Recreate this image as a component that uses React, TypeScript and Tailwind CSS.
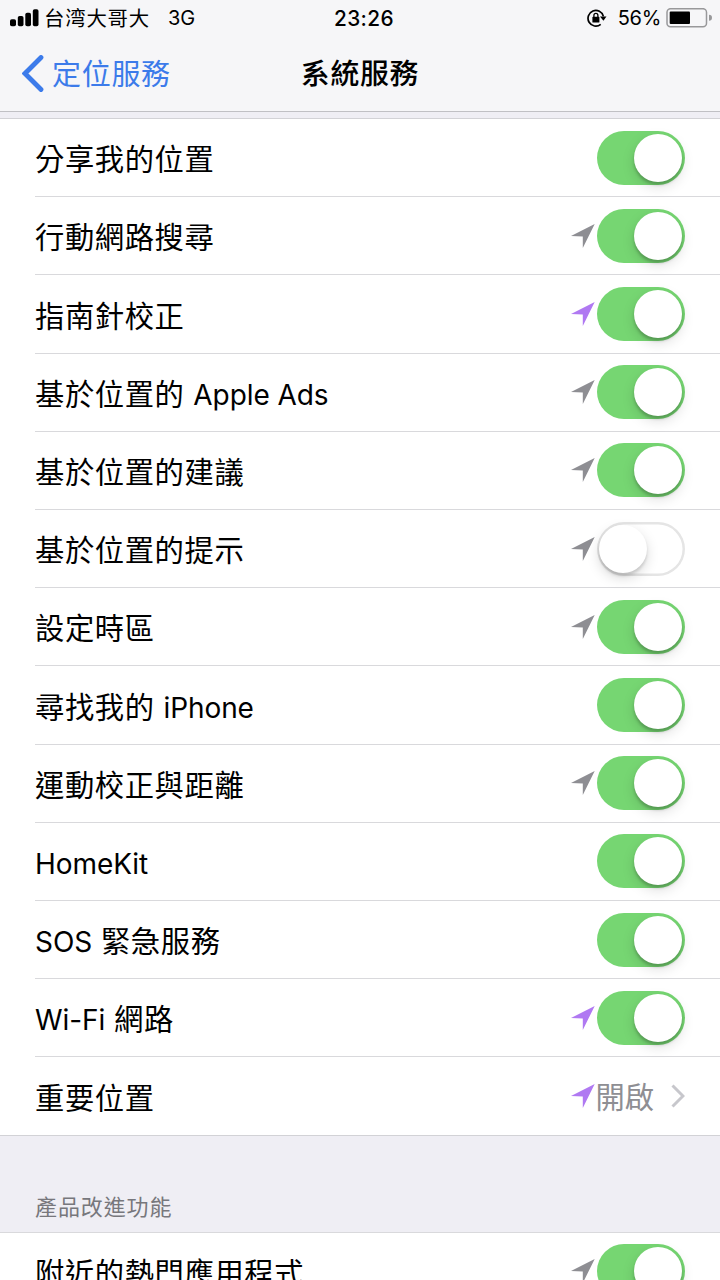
import { Fragment } from "react";
import clsx from "clsx";

type Arrow = "gray" | "purple";

interface Service {
  label: string;
  arrow?: Arrow;
  on?: boolean;
  value?: string;
}

const services: Service[] = [
  { label: "分享我的位置", on: true },
  { label: "行動網路搜尋", arrow: "gray", on: true },
  { label: "指南針校正", arrow: "purple", on: true },
  { label: "基於位置的 Apple Ads", arrow: "gray", on: true },
  { label: "基於位置的建議", arrow: "gray", on: true },
  { label: "基於位置的提示", arrow: "gray", on: false },
  { label: "設定時區", arrow: "gray", on: true },
  { label: "尋找我的 iPhone", on: true },
  { label: "運動校正與距離", arrow: "gray", on: true },
  { label: "HomeKit", on: true },
  { label: "SOS 緊急服務", on: true },
  { label: "Wi-Fi 網路", arrow: "purple", on: true },
  { label: "重要位置", arrow: "purple", value: "開啟" },
];

// Latin runs are set slightly smaller than the Chinese text around them
function Label({ text }: { text: string }) {
  const parts = text.split(/([A-Za-z][A-Za-z -]*[A-Za-z])/);
  return (
    <span className="block text-[29.3px] leading-[40px] tracking-[0.6px] whitespace-pre text-black">
      {parts.map((part, i) =>
        i % 2 ? (
          <span key={i} className="text-[28px] leading-none tracking-[-0.08px]">{part}</span>
        ) : (
          <Fragment key={i}>{part}</Fragment>
        )
      )}
    </span>
  );
}

function LocationArrow({ color }: { color: Arrow }) {
  return (
    <svg
      viewBox="0 0 24 24"
      className={clsx("h-6 w-6 shrink-0", color === "gray" ? "text-[#8e8e93]" : "text-[#b079f2]")}
      fill="currentColor"
    >
      <path d="M23.7 0 L0 12 L11.8 12.6 V24 Z" />
    </svg>
  );
}

function Toggle({ on }: { on: boolean }) {
  return (
    <button
      role="switch"
      aria-checked={on}
      className={clsx(
        "flex h-[54px] w-[88.5px] shrink-0 items-center rounded-full",
        on ? "justify-end bg-[#76d672] pr-[3px]" : "justify-start bg-white pl-[2px] shadow-[inset_0_0_0_2.5px_#e5e5e5]"
      )}
    >
      <span
        className={clsx(
          "h-12 w-12 rounded-full bg-white",
          on
            ? "shadow-[0_3px_3px_rgba(0,0,0,0.2),0_5px_13px_rgba(0,0,0,0.13)]"
            : "shadow-[0_3px_3px_rgba(0,0,0,0.13),0_5px_13px_rgba(0,0,0,0.15)]"
        )}
      />
    </button>
  );
}

function Row({ label, arrow, on, value, last }: Service & { last?: boolean }) {
  return (
    <div className={clsx("flex pl-[35px]", last ? "h-[77.3px]" : "h-[78.21px]")}>
      <div className={clsx("flex flex-1 items-center justify-between pr-[35px]", !last && "border-b border-[#d9d9dc]")}>
        <div className="pt-[5px]">
          <Label text={label} />
        </div>
        <div className="flex items-center">
          {arrow && <LocationArrow color={arrow} />}
          {value ? (
            <>
              <span className="pt-[4px] text-[29.3px] leading-[40px] text-[#8e8e93]">{value}</span>
              <svg viewBox="0 0 14 24" className="ml-[17px] h-6 w-[14px]" fill="none" stroke="#c7c7cc" strokeWidth="3">
                <path d="M1.5 1.5 L12 12 L1.5 22.5" />
              </svg>
            </>
          ) : (
            <div className="ml-[2px]">
              <Toggle on={!!on} />
            </div>
          )}
        </div>
      </div>
    </div>
  );
}

function StatusBar() {
  return (
    <div className="grid h-9 grid-cols-[1fr_auto_1fr] items-center pr-[8px] pl-[10px] text-black">
      <div className="flex items-center">
        <svg viewBox="0 0 29 18" className="h-[18px] w-[29px]" fill="currentColor">
          <rect x="0" y="10.2" width="6" height="7" rx="1.8" />
          <rect x="7.8" y="7" width="5.7" height="10.2" rx="1.8" />
          <rect x="15.3" y="3.7" width="5.7" height="13.5" rx="1.8" />
          <rect x="22.8" y="0.2" width="5.7" height="17" rx="1.8" />
        </svg>
        <span className="ml-[5px] pt-[2px] text-[20.4px] leading-6 tracking-[0.8px]">台湾大哥大</span>
        <span className="ml-[18px] text-[20px]">3G</span>
      </div>
      <span className="ml-[6px] pt-px text-[20.8px] font-medium tracking-[0.4px]">23:26</span>
      <div className="flex items-center justify-end">
        <svg viewBox="0 0 20 18" className="h-[18px] w-5" fill="none" stroke="currentColor" strokeWidth="1.7">
          <path d="M13.7 15.4 A7.8 7.8 0 1 1 16.4 7.4" />
          <path d="M13 7.5 H19.5 L16.4 11.7 Z" fill="currentColor" stroke="none" />
          <rect x="5.4" y="7.8" width="7" height="5.8" rx="0.6" fill="currentColor" stroke="none" />
          <path d="M6.9 8.2 V6.4 A2 2 0 0 1 10.9 6.4 V8.2" strokeWidth="1.3" />
        </svg>
        <span className="ml-[11px] text-[20px] tracking-[-0.3px]">56%</span>
        <svg viewBox="0 0 46 20" className="ml-[5px] h-5 w-[46px]">
          <rect x="1" y="0.7" width="39.5" height="18" rx="3.5" fill="none" stroke="#98989a" strokeWidth="1.5" />
          <rect x="3.7" y="3.4" width="20.3" height="12.6" rx="1" fill="#000" />
          <path d="M43 6.7 A3 3 0 0 1 43 12.7 Z" fill="#98989a" />
        </svg>
      </div>
    </div>
  );
}

export default function App() {
  return (
    <div className="flex h-[1280px] w-[720px] flex-col overflow-hidden bg-[#efeef4] font-['Inter','Noto_Sans_CJK_TC',sans-serif]">
      <header className="h-[112px] shrink-0 border-b border-[#c0c0c4] bg-[#f6f6f8]">
        <StatusBar />
        <div className="grid h-[75px] grid-cols-[1fr_auto_1fr] items-center">
          <button className="flex items-center pl-[22px] text-[#3c7bea]">
            <svg viewBox="0 0 22 38" className="h-[38px] w-[22px]" fill="none" stroke="currentColor" strokeWidth="4.8" strokeLinecap="round">
              <path d="M19 2.5 L3 18.5 L19 34.5" />
            </svg>
            <span className="ml-2 pt-[2px] text-[29px] leading-[40px] tracking-[0.7px]">定位服務</span>
          </button>
          <h1 className="text-[28.9px] leading-[40px] font-medium tracking-[0.7px] text-black">系統服務</h1>
        </div>
      </header>

      <main className="flex flex-col pt-[6px]">
        <section className="border-y border-[#d2d2d6] bg-white">
          {services.map((service, i) => (
            <Row key={service.label} {...service} last={i === services.length - 1} />
          ))}
        </section>
        <h2 className="flex h-24 items-end pb-[9px] pl-[35px] text-[22px] leading-[32px] tracking-[0.9px] text-[#77777c]">
          產品改進功能
        </h2>
        <section className="border-t border-[#d9d9dc] bg-white">
          <Row label="附近的熱門應用程式" arrow="gray" on last />
        </section>
      </main>
    </div>
  );
}
